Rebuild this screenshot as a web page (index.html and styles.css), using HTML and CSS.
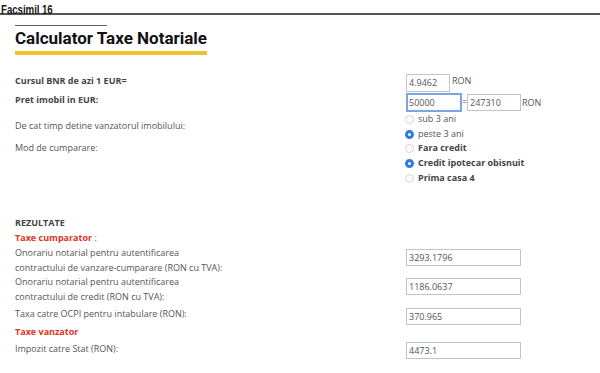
FILE: index.html
```html
<!DOCTYPE html>
<html lang="ro">
<head>
<meta charset="utf-8">
<title>Calculator Taxe Notariale</title>
<link rel="stylesheet" href="styles.css">
</head>
<body>
<div class="facsimil"><span class="facsimil-text">Facsimil 16</span></div>
<main class="page">
  <div class="title-wrap">
    <div class="title-rule"></div>
    <h1 class="title">Calculator Taxe Notariale</h1>
    <div class="title-bar"></div>
  </div>

  <div class="form">
    <div class="label bold row1">Cursul BNR de azi 1 EUR=</div>
    <div class="value row1"><span class="box w44">4.9462</span><span class="unit">RON</span></div>

    <div class="label bold row2">Pret imobil in EUR:</div>
    <div class="value row2"><span class="box w56 focus">50000</span><span class="eq">=</span><span class="box w54">247310</span><span class="unit">RON</span></div>

    <div class="label center">De cat timp detine vanzatorul imobilului:</div>
    <div class="radios">
      <div class="opt"><span class="radio"></span>sub 3 ani</div>
      <div class="opt"><span class="radio checked"></span>peste 3 ani</div>
    </div>

    <div class="label top">Mod de cumparare:</div>
    <div class="radios">
      <div class="opt bold"><span class="radio"></span>Fara credit</div>
      <div class="opt bold"><span class="radio checked"></span>Credit ipotecar obisnuit</div>
      <div class="opt bold"><span class="radio"></span>Prima casa 4</div>
    </div>
  </div>

  <div class="results">
    <div class="heading">REZULTATE</div>
    <div class="group"><span class="red">Taxe cumparator</span> :</div>
    <div class="res-grid">
      <div class="rlabel">Onorariu notarial pentru autentificarea<br>contractului de vanzare-cumparare (RON cu TVA):</div>
      <div class="rval"><span class="box w115">3293.1796</span></div>

      <div class="rlabel">Onorariu notarial pentru autentificarea<br>contractului de credit (RON cu TVA):</div>
      <div class="rval"><span class="box w115">1186.0637</span></div>

      <div class="rlabel mid">Taxa catre OCPI pentru intabulare (RON):</div>
      <div class="rval"><span class="box w115">370.965</span></div>
    </div>
    <div class="group"><span class="red">Taxe vanzator</span></div>
    <div class="res-grid">
      <div class="rlabel mid">Impozit catre Stat (RON):</div>
      <div class="rval"><span class="box w115">4473.1</span></div>
    </div>
  </div>
</main>
</body>
</html>
```

FILE: styles.css
```css
html, body {
  margin: 0;
  padding: 0;
  background: #ffffff;
}

.facsimil {
  height: 13px;
  padding-left: 1px;
  border-bottom: 2px solid #555555;
}

.facsimil-text {
  display: inline-block;
  font-family: "Liberation Sans", Arial, sans-serif;
  font-weight: bold;
  font-size: 12.5px;
  line-height: 13px;
  color: #1a1a1a;
  transform: scaleX(0.78);
  transform-origin: left center;
  letter-spacing: -0.1px;
}

.page {
  padding-left: 15px;
  font-family: "Open Sans", sans-serif;
  font-size: 9px;
  line-height: 14.7px;
  color: #555555;
}

.title-wrap {
  display: inline-block;
  margin-top: 10px;
}

.title-rule {
  width: 92px;
  height: 1px;
  background: #5a6270;
}

.title {
  margin: 2px 0 0 0;
  font-family: Roboto, sans-serif;
  font-weight: bold;
  font-size: 17px;
  line-height: 20px;
  color: #111111;
}

.title-bar {
  height: 4px;
  margin-top: 3px;
  width: 192px;
  background: #f0c22b;
}

.form {
  display: grid;
  grid-template-columns: 391px auto;
  margin-top: 19px;
}

.bold {
  font-weight: bold;
  color: #444444;
}

.label {
  align-self: center;
}

.label.center {
  align-self: center;
}

.label.top {
  align-self: start;
}

.value {
  display: flex;
  align-items: center;
}

.row1 {
  height: 18px;
}

.row2 {
  height: 19px;
  margin-top: 1px;
}

.box {
  box-sizing: border-box;
  display: inline-block;
  height: 17px;
  line-height: 15px;
  border: 1px solid #bcc5d0;
  padding: 0 2px;
  color: #555555;
  background: #ffffff;
}

.row1 .box {
  height: 18px;
  line-height: 16px;
}

.w44 { width: 44px; }
.w54 { width: 54px; }
.w56 { width: 56px; }
.w115 { width: 115px; }

.box.focus {
  height: 19px;
  line-height: 15px;
  border: 2px solid #7aa5e6;
  padding: 0 1px;
}

.unit {
  margin-left: 2px;
  align-self: flex-start;
  line-height: 14px;
  color: #555555;
}

.row2 .unit {
  margin-left: 1px;
  align-self: center;
}

.eq {
  width: 5px;
  text-align: center;
}

.radios {
  display: flex;
  flex-direction: column;
}

.opt {
  display: flex;
  align-items: center;
  height: 14.7px;
}

.radio {
  box-sizing: border-box;
  width: 9px;
  height: 9px;
  border-radius: 50%;
  border: 1px solid #d6d6d6;
  background: #fbfbfb;
  margin-left: -1px;
  margin-right: 4px;
  flex: none;
}

.radio.checked {
  border: 3px solid #2f7be6;
  background: #ffffff;
}

.results {
  margin-top: 31px;
}

.heading {
  font-weight: bold;
  color: #444444;
}

.red {
  font-weight: bold;
  color: #e2331d;
}

.res-grid {
  display: grid;
  grid-template-columns: 391px auto;
}

.rlabel {
  align-self: start;
}

.rlabel.mid {
  align-self: center;
}

.rval {
  padding-top: 3px;
  height: 17px;
}
```
